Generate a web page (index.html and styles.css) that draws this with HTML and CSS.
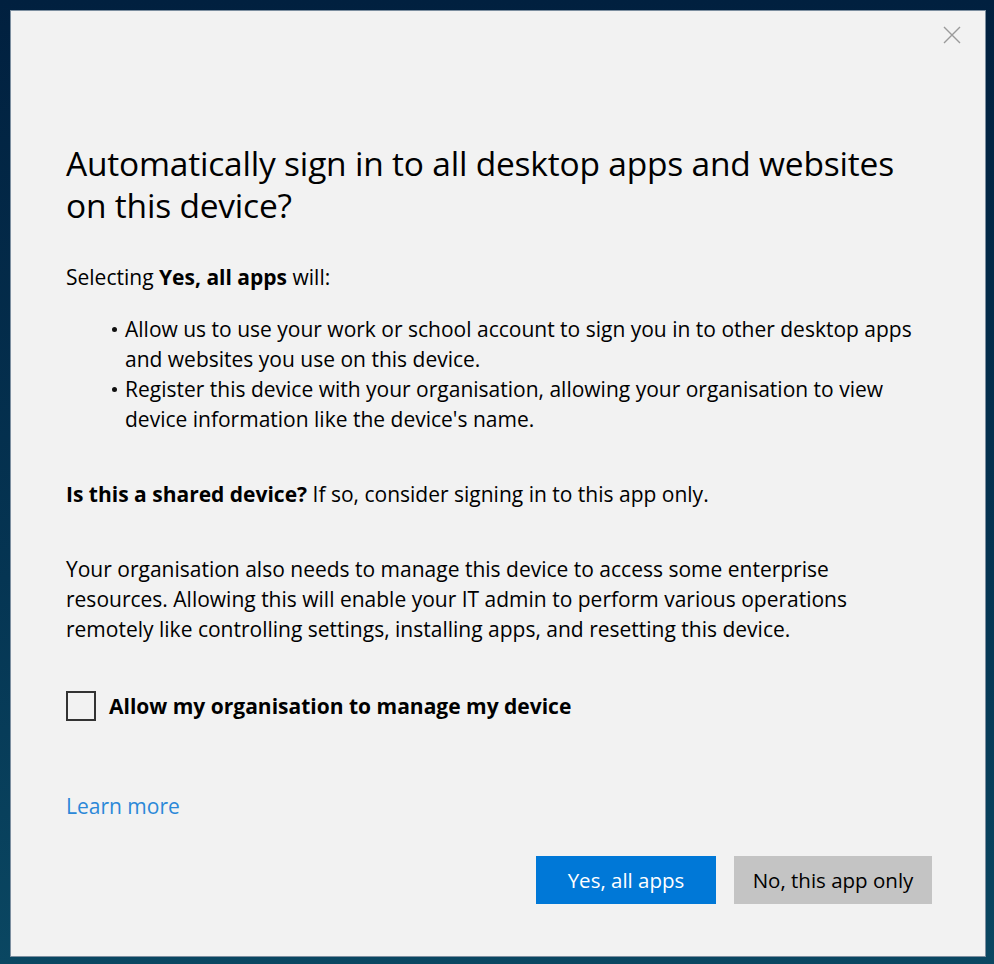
FILE: index.html
```html
<!DOCTYPE html>
<html lang="en">

<head>
    <meta charset="UTF-8">
    <meta name="viewport" content="width=device-width, initial-scale=1.0">
    <title>Sign in to all apps</title>
    <link rel="stylesheet" href="styles.css">
</head>

<body>
    <div class="dialog">
        <button class="close-btn" aria-label="Close">
            <svg width="18" height="18" viewBox="0 0 18 18">
                <path d="M1 1 L17 17 M17 1 L1 17" stroke="#9a9a9a" stroke-width="1.4" fill="none" />
            </svg>
        </button>

        <h1>Automatically sign in to all desktop apps and websites on this device?</h1>

        <p class="intro">Selecting <strong>Yes, all apps</strong> will:</p>

        <ul class="effects">
            <li>Allow us to use your work or school account to sign you in to other desktop apps and websites you use on this device.</li>
            <li>Register this device with your organisation, allowing your organisation to view device information like the device's name.</li>
        </ul>

        <p class="shared"><strong>Is this a shared device?</strong> If so, consider signing in to this app only.</p>

        <p class="manage">Your organisation also needs to manage this device to access some enterprise resources. Allowing this will enable your IT admin to perform various operations remotely like controlling settings, installing apps, and resetting this device.</p>

        <label class="check-row">
            <span class="check-box"></span>
            <span class="check-label">Allow my organisation to manage my device</span>
        </label>

        <a class="learn-more" href="#">Learn more</a>

        <div class="actions">
            <button class="btn btn-primary">Yes, all apps</button>
            <button class="btn btn-secondary">No, this app only</button>
        </div>
    </div>
</body>

</html>
```

FILE: styles.css
```css
/* Reset default */
* {
    box-sizing: border-box;
}

body,
h1,
p,
ul,
li,
button {
    margin: 0;
    padding: 0;
}

/* Desktop backdrop */
body {
    width: 994px;
    height: 964px;
    background: linear-gradient(180deg, #01203f 0%, #053553 60%, #0a4762 100%);
    font-family: "Open Sans", "Noto Sans", sans-serif;
    color: #000;
    padding: 10px 8px 7px 10px;
    overflow: hidden;
}

/* Dialog window */
.dialog {
    position: relative;
    height: 947px;
    width: 976px;
    background-color: #f2f2f2;
    border: 1px solid #7d8fa0;
    padding: 131px 53px 0 55px;
    display: flex;
    flex-direction: column;
    font-size: 21px;
    line-height: 30px;
}

.close-btn {
    position: absolute;
    top: 15px;
    right: 24px;
    width: 18px;
    height: 18px;
    border: none;
    background: none;
    cursor: pointer;
}

.close-btn svg {
    display: block;
}

h1 {
    font-size: 33.5px;
    font-weight: 400;
    line-height: 42px;
    letter-spacing: -0.2px;
}

.intro {
    margin-top: 36px;
}

strong {
    font-weight: 700;
}

/* Bullet list */
.effects {
    margin-top: 22px;
    list-style: none;
    padding-left: 59px;
}

.effects li {
    position: relative;
}

.effects li::before {
    content: "";
    position: absolute;
    left: -13px;
    top: 13px;
    width: 5px;
    height: 5px;
    border-radius: 50%;
    background-color: #111;
}

.shared {
    margin-top: 45px;
}

.manage {
    margin-top: 45px;
    max-width: 800px;
}

/* Checkbox */
.check-row {
    margin-top: 47px;
    display: flex;
    align-items: center;
    gap: 13px;
    cursor: pointer;
}

.check-box {
    width: 30px;
    height: 30px;
    border: 2px solid #333;
    background-color: #f2f2f2;
}

.check-label {
    font-weight: 700;
}

.learn-more {
    margin-top: 70px;
    align-self: flex-start;
    color: #2b88d8;
    text-decoration: none;
}

/* Buttons */
.actions {
    margin-top: 35px;
    display: flex;
    justify-content: flex-end;
    gap: 18px;
}

.btn {
    height: 48px;
    border: none;
    font-family: inherit;
    font-size: 20.5px;
    cursor: pointer;
}

.btn-primary {
    width: 180px;
    background-color: #0078d7;
    color: #fff;
}

.btn-secondary {
    width: 198px;
    background-color: #c4c4c4;
    color: #000;
}
```
